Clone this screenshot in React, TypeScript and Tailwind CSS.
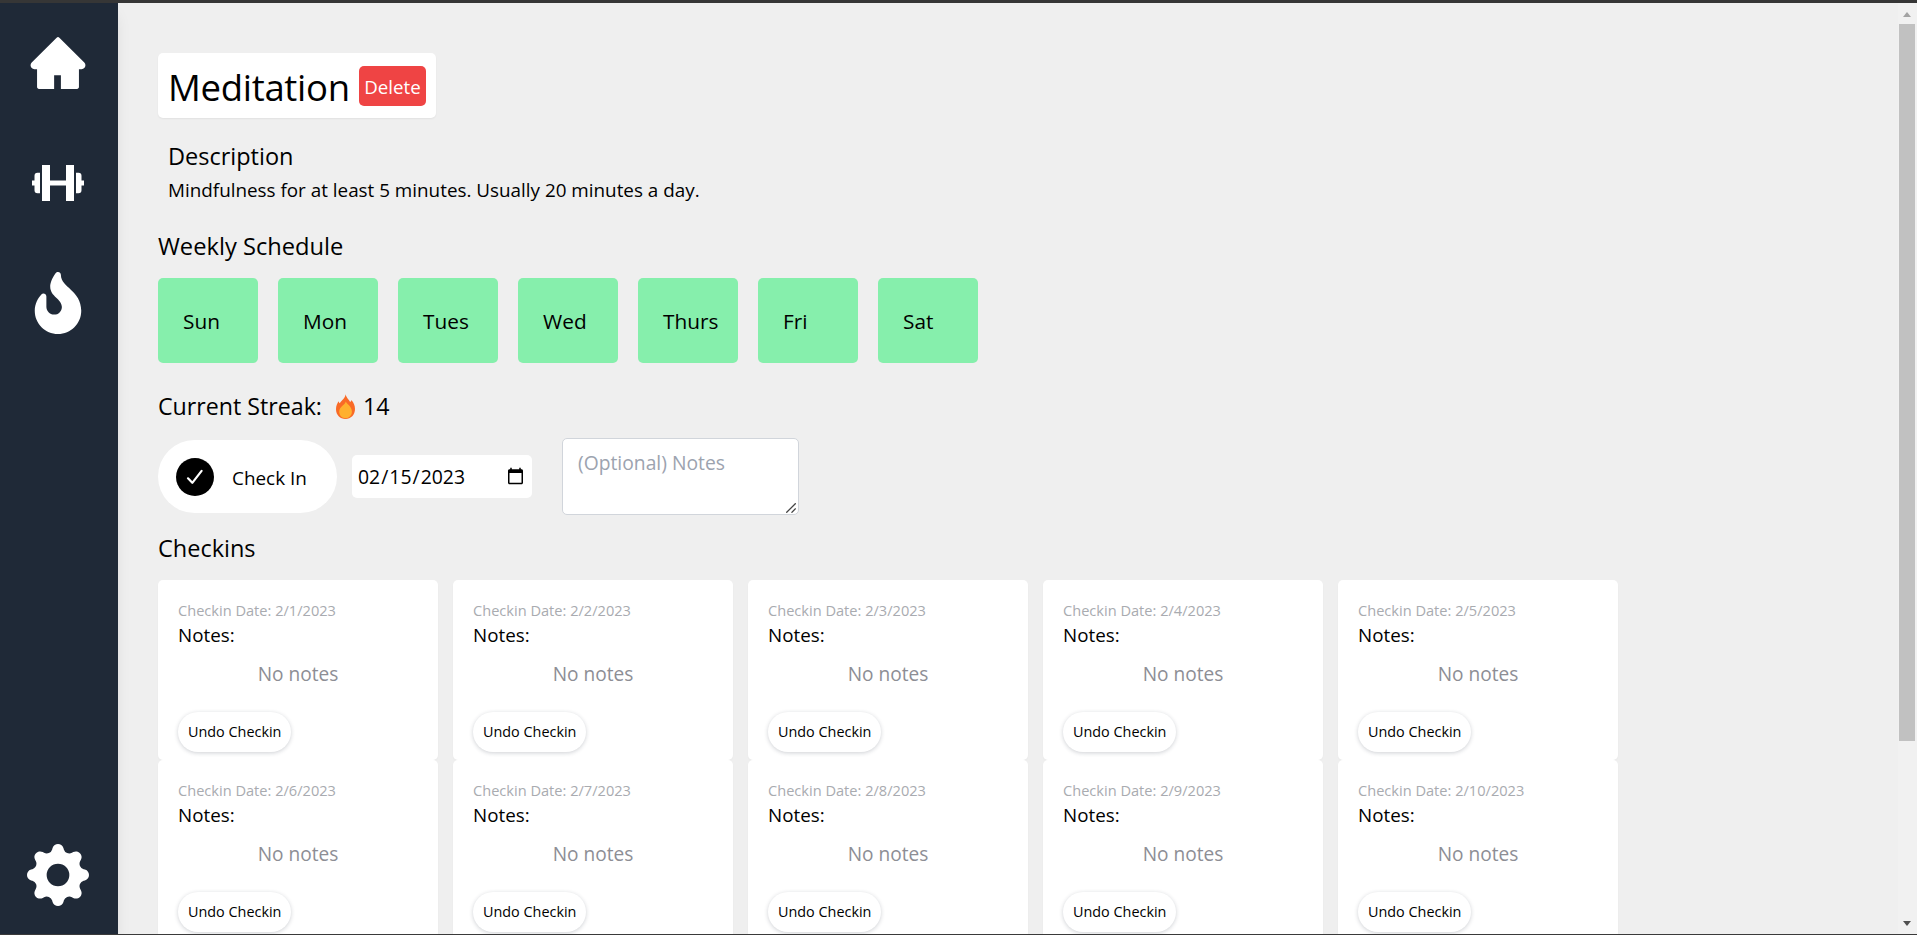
import { AiFillHome } from "react-icons/ai";
import { FaFire } from "react-icons/fa";
import { BsGearFill } from "react-icons/bs";

const days = ["Sun", "Mon", "Tues", "Wed", "Thurs", "Fri", "Sat"];
const checkins = Array.from({ length: 10 }, (_, i) => `2/${i + 1}/2023`);

function Dumbbell() {
  return (
    <svg viewBox="0 0 62 62" className="size-[62px]" fill="currentColor" aria-hidden="true">
      <rect x="15" y="13" width="8" height="36" />
      <rect x="39" y="13" width="8" height="36" />
      <rect x="23" y="28.5" width="16" height="5" />
      <path d="M13 20.8v20.4H10.5a3 3 0 0 1-3-3V33.5H5v-5H7.5V23.8a3 3 0 0 1 3-3z" />
      <path d="M49 20.8v20.4h2.5a3 3 0 0 0 3-3V33.5H57v-5H54.5V23.8a3 3 0 0 0-3-3z" />
    </svg>
  );
}

function Sidebar() {
  return (
    <nav className="z-10 flex w-[118px] shrink-0 flex-col items-center justify-between bg-[#1f2937] pt-[29px] pr-[2px] pb-[28px] text-white shadow-lg">
      <div className="flex flex-col gap-[58px]">
        <AiFillHome size={62} />
        <Dumbbell />
        <FaFire size={62} />
      </div>
      <BsGearFill size={62} />
    </nav>
  );
}

function Flame() {
  return (
    <svg viewBox="0 0 19 25" className="ml-[14px] h-[25px] w-[19px]" aria-hidden="true">
      <path
        d="M9.6 0.2C10.6 4.2 13 5.4 14.2 8c.7-.3 1-1 1.1-1.9C17.800 8.500 19 11.700 19 15.100 19 21 14.900 25 9.500 25S0 21 0 15.300C0 11.800 1.300 9.500 2.500 7.300c.3 1 .7 1.600 1.300 1.900C5.400 6.400 9.200 4.300 9.600.2z"
        fill="#f96a26"
      />
      <path
        d="M9.800 7.500c.9 2.700 6.100 4.900 6.100 10 0 3.800-2.700 6.700-6.300 6.700s-6.400-2.800-6.400-6.500c0-4.900 5.700-6.600 6.600-10.200z"
        fill="#ffb02e"
      />
    </svg>
  );
}

function NotesField() {
  return (
    <div className="relative ml-[30px] h-[77px] w-[237px]">
      <textarea
        placeholder="(Optional) Notes"
        className="block size-full resize-none rounded-[5px] border border-[#d1d5db] bg-white px-[15px] py-[9px] text-[19.3px] leading-[30px] placeholder:text-[#9ca3af]"
      />
      <svg
        viewBox="0 0 10 10"
        className="pointer-events-none absolute right-[3px] bottom-[2px] size-2.5"
        fill="none"
        stroke="#444"
        strokeWidth="1.3"
        aria-hidden="true"
      >
        <path d="M0.300 9.700 9.700 0.300M5.500 9.700 9.700 5.500" />
      </svg>
    </div>
  );
}

function CheckinCard({ date }: { date: string }) {
  return (
    <article className="flex h-[180px] w-[280px] flex-col rounded-[5px] bg-white px-5 pt-5 shadow-[0_1px_2px_rgba(0,0,0,0.03)]">
      <p className="text-[14.6px] leading-5 text-[#a9abb0]">Checkin Date: {date}</p>
      <p className="text-[18.8px] leading-[31px]">Notes:</p>
      <p className="mt-2 text-center text-[19.1px] leading-[30px] text-[#8d8e95]">No notes</p>
      <button className="mt-[23px] h-10 self-start rounded-full bg-white px-2.5 text-[14.4px] leading-5 shadow-[0_1px_4px_rgba(30,41,59,0.22)]">
        Undo Checkin
      </button>
    </article>
  );
}

function Scrollbar() {
  return (
    <div className="flex w-[19px] shrink-0 flex-col items-center bg-[#f1f1f1] pt-[9px] pr-0.5 pb-2">
      <svg viewBox="0 0 8 5" className="mb-[7px] h-[5px] w-2" fill="#a3a3a3" aria-hidden="true">
        <path d="M4 0 8 5H0z" />
      </svg>
      <div className="h-[717px] w-4 bg-[#c1c1c1]" />
      <svg viewBox="0 0 8 5" className="mt-auto h-[5px] w-2" fill="#505050" aria-hidden="true">
        <path d="M0 0h8L4 5z" />
      </svg>
    </div>
  );
}

export default function App() {
  return (
    <div className="flex h-[935px] w-[1917px] overflow-hidden border-t-[3px] border-b border-t-[#363636] border-b-[#3a3a3a] bg-[#efefef] font-['Open_Sans',sans-serif] text-black">
      <Sidebar />
      <main className="flex min-w-0 flex-1 flex-col items-start pt-[50px] pl-10 *:shrink-0">
        <header className="flex h-[65px] w-[278px] items-center rounded-[5px] bg-white pl-2.5 shadow-[0_1px_2px_rgba(0,0,0,0.06)]">
          <h1 className="w-[191px] pt-[3px] text-[36.5px] leading-[45px] tracking-[-0.3px]">Meditation</h1>
          <button className="h-10 w-[67px] rounded-[5px] bg-[#ef4444] pt-[3px] text-[18.7px] leading-[30px] text-white">
            Delete
          </button>
        </header>

        <section className="mt-5 pl-2.5">
          <h2 className="text-[23.5px] leading-[37px]">Description</h2>
          <p className="text-[18.85px] leading-[30px]">
            Mindfulness for at least 5 minutes. Usually 20 minutes a day.
          </p>
        </section>

        <h2 className="mt-6 text-[23.7px] leading-[35px]">Weekly Schedule</h2>
        <div className="mt-[14px] flex gap-5">
          {days.map((day) => (
            <div key={day} className="h-[85px] w-[100px] rounded-[5px] bg-[#86efac] p-[25px] text-[20.8px] leading-[37px]">
              {day}
            </div>
          ))}
        </div>

        <div className="mt-[25px] flex items-center text-[23.2px] leading-[37px]">
          <h2>Current Streak:</h2>
          <Flame />
          <span className="ml-2">14</span>
        </div>

        <div className="mt-[13px] flex h-[77px] items-center">
          <button className="flex h-[73px] w-[179px] items-center rounded-full bg-white pl-[18px] text-[18.9px]">
            <svg viewBox="0 0 38 38" className="mr-[18px] size-[38px]" aria-hidden="true">
              <circle cx="19" cy="19" r="19" />
              <path d="m12 20.300 4.300 4.500 9.300-12" fill="none" stroke="#fff" strokeWidth="2.200" strokeLinecap="round" strokeLinejoin="round" />
            </svg>
            <span className="pt-[3px]">Check In</span>
          </button>
          <input
            type="date"
            defaultValue="2023-02-15"
            className="ml-[15px] h-[43px] w-[180px] rounded-[5px] bg-white px-[5px] text-[19.4px]"
          />
          <NotesField />
        </div>

        <h2 className="mt-[15px] text-[23.5px] leading-[37px]">Checkins</h2>
        <div className="mt-[13px] grid grid-cols-[repeat(5,280px)] gap-x-[15px]">
          {checkins.map((date) => (
            <CheckinCard key={date} date={date} />
          ))}
        </div>
      </main>
      <Scrollbar />
    </div>
  );
}
